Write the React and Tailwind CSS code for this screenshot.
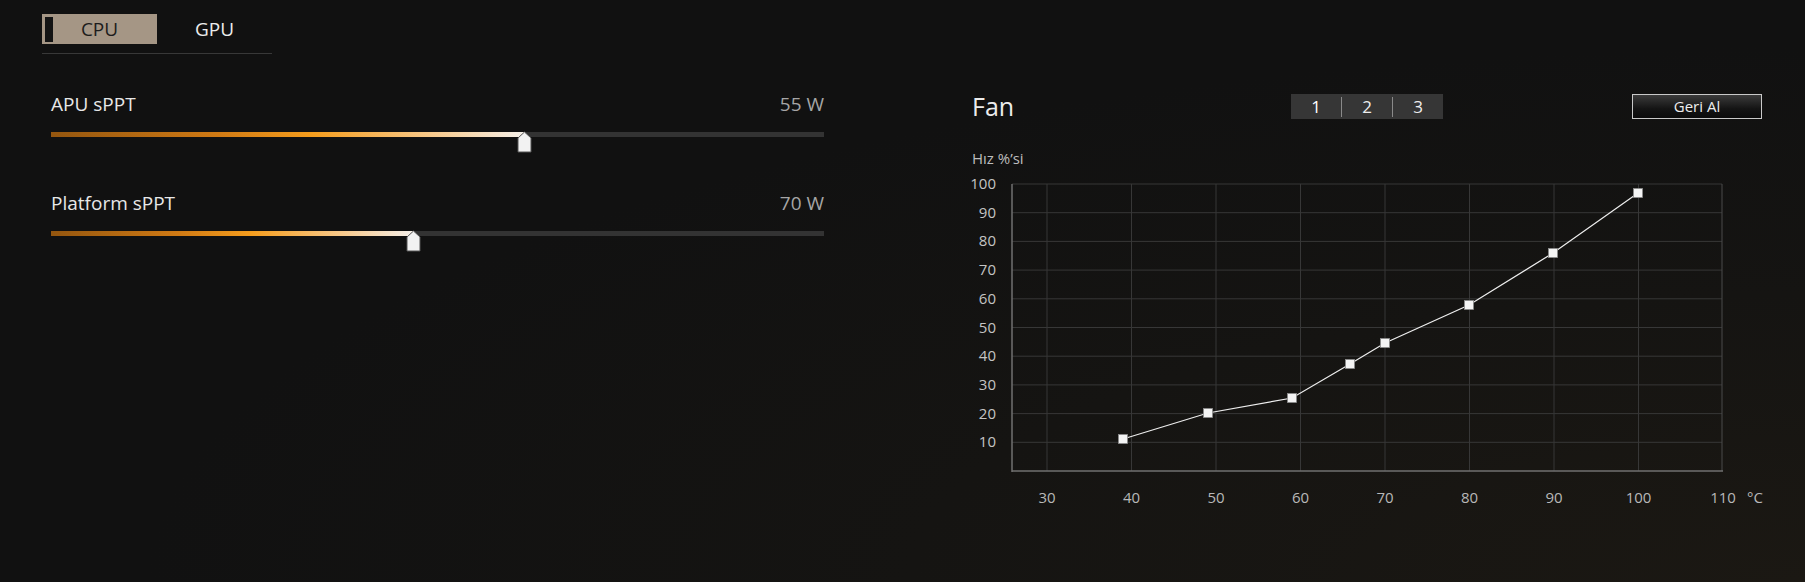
import { useState } from 'react';

// Armoury-style power / fan panel
const FONT = { fontFamily: '"Open Sans", "Noto Sans", "Liberation Sans", sans-serif' };

const OX = 940;
const OY = 168;
const tx = (t) => 1047 + (t - 30) * 8.45 - OX;
const vy = (v) => 471 - v * 2.87 - OY;

const curve = [
  [1123, 439],
  [1208, 413],
  [1292, 398],
  [1350, 364],
  [1385, 343],
  [1469, 305],
  [1553, 253],
  [1638, 193],
];

function Slider({ label, value, fraction }) {
  return (
    <div className="w-[773px]">
      <div className="flex justify-between text-[19px] leading-[26px]">
        <span className="text-[#e8e8e8]">{label}</span>
        <span className="text-[#a6a6a6]">{value}</span>
      </div>
      <div className="relative mt-[15px] h-[5px] bg-[#333333]">
        <div
          className="h-full bg-[linear-gradient(90deg,#94560f_0%,#d07a14_35%,#f59d1d_55%,#f8c98a_80%,#f5f0ea_100%)]"
          style={{ width: `${fraction * 100}%` }}
        />
        <svg
          width="15"
          height="22"
          viewBox="0 0 15 22"
          className="absolute top-[-1px]"
          style={{ left: `calc(${fraction * 100}% - 7.5px)` }}
        >
          <path d="M7.5 1 L14 7 L14 21 L1 21 L1 7 Z" fill="#f2f2f2" stroke="#555555" strokeWidth="1" />
        </svg>
      </div>
    </div>
  );
}

function FanChart() {
  const ys = [100, 90, 80, 70, 60, 50, 40, 30, 20, 10];
  const xs = [30, 40, 50, 60, 70, 80, 90, 100];
  const left = 1012 - OX;
  const right = 1722 - OX;
  const top = 184 - OY;
  const bottom = 471 - OY;
  return (
    <svg width="865" height="352" className="block">
      {ys.map((v) => (
        <line key={v} x1={left} x2={right} y1={vy(v)} y2={vy(v)} stroke="#373737" strokeWidth="1" />
      ))}
      {xs.map((t) => (
        <line key={t} x1={tx(t)} x2={tx(t)} y1={top} y2={bottom} stroke="#373737" strokeWidth="1" />
      ))}
      <line x1={right} x2={right} y1={top} y2={bottom} stroke="#4a4a4a" strokeWidth="1" />
      <line x1={left} x2={left} y1={top} y2={bottom + 1} stroke="#707070" strokeWidth="1.5" />
      <line x1={left} x2={right + 1} y1={bottom} y2={bottom} stroke="#707070" strokeWidth="1.5" />

      {ys.map((v) => (
        <text key={v} x={996 - OX} y={vy(v) + 5} textAnchor="end" fontSize="15" fill="#c4c4c4" style={FONT}>
          {v}
        </text>
      ))}
      {[...xs, 110].map((t) => (
        <text key={t} x={tx(t)} y={503 - OY} textAnchor="middle" fontSize="15" fill="#b8b8b8" style={FONT}>
          {t}
        </text>
      ))}
      <text x={1755 - OX} y={503 - OY} textAnchor="middle" fontSize="15" fill="#b8b8b8" style={FONT}>
        °C
      </text>

      <polyline
        points={curve.map(([x, y]) => `${x - OX},${y - OY}`).join(' ')}
        fill="none"
        stroke="#eeeeee"
        strokeWidth="1.2"
      />
      {curve.map(([x, y]) => (
        <rect
          key={x}
          x={x - OX - 4.5}
          y={y - OY - 4.5}
          width="9"
          height="9"
          fill="#f4f4f4"
          stroke="#8a8a8a"
          strokeWidth="0.8"
        />
      ))}
    </svg>
  );
}

export default function App() {
  const [tab, setTab] = useState('CPU');
  const [fan, setFan] = useState(1);

  return (
    <div
      className="flex h-[582px] w-full overflow-hidden bg-[#111111] bg-[radial-gradient(ellipse_at_100%_100%,#1b1813_0%,#151412_35%,#111111_65%)]"
      style={FONT}
    >
      {/* Sol panel: CPU / GPU güç limitleri */}
      <div className="w-[940px] shrink-0 pl-[42px] pt-[14px]">
        <div className="flex w-[230px] border-b border-[#383838] pb-[9px]">
          {['CPU', 'GPU'].map((t) => (
            <button
              key={t}
              onClick={() => setTab(t)}
              className={`relative flex h-[30px] w-[115px] items-center justify-center text-[19px] ${
                tab === t ? 'bg-[#a59685] text-[#1c1c1c]' : 'text-[#ececec]'
              }`}
            >
              {tab === t && <span className="absolute left-[3px] top-[3px] h-[25px] w-[8px] bg-[#141414]" />}
              {t}
            </button>
          ))}
        </div>

        <div className="ml-[9px] mt-[37px]">
          <Slider label="APU sPPT" value="55 W" fraction={0.613} />
          <div className="mt-[53px]">
            <Slider label="Platform sPPT" value="70 W" fraction={0.469} />
          </div>
        </div>
      </div>

      {/* Sağ panel: fan eğrisi */}
      <div className="w-[865px] shrink-0">
        <div className="mt-[89px] flex h-[34px] items-start pl-[32px]">
          <div className="w-[319px] text-[25px] leading-[34px] text-[#ececec]">Fan</div>
          <div className="mt-[5px] flex h-[25px] w-[152px] items-center bg-[#363636]">
            {[1, 2, 3].map((n) => (
              <button
                key={n}
                onClick={() => setFan(n)}
                className={`flex h-[20px] flex-1 items-center justify-center text-[17px] ${
                  n > 1 ? 'border-l border-[#8a8a8a]' : ''
                } ${fan === n ? 'text-white' : 'text-[#eeeeee]'}`}
              >
                {n}
              </button>
            ))}
          </div>
          <div className="w-[189px]" />
          <button className="mt-[5px] flex h-[25px] w-[130px] items-center justify-center border border-[#c9c9c9] bg-[linear-gradient(180deg,#3b3b3b_0%,#141414_60%,#0b0b0b_100%)] text-[15px] text-[#eeeeee]">
            Geri Al
          </button>
        </div>

        <div className="mt-[25px] pl-[32px] text-[15px] leading-[20px] text-[#bdbdbd]">Hız %’si</div>
        <FanChart />
      </div>
    </div>
  );
}
